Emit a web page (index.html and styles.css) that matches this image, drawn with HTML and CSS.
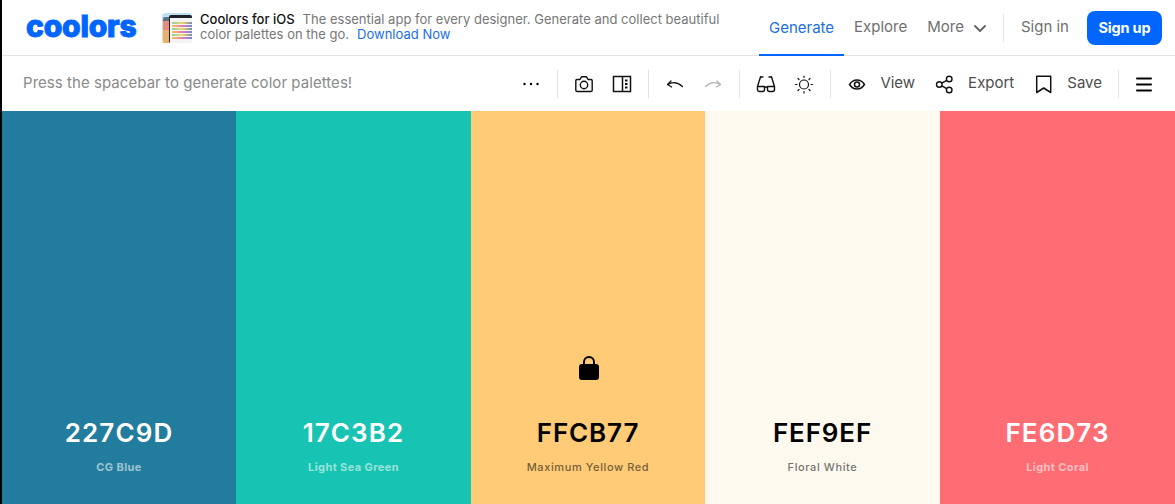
FILE: index.html
```html
<!DOCTYPE html>
<html>
<head>
<meta http-equiv="Content-Type" content="text/html; charset=utf-8">
<title>Coolors</title>
<link rel="stylesheet" href="styles.css">
</head>
<body>
<div class="page">

<!-- top bar -->
<header class="topbar">
  <a class="logo">coolors</a>
  <div class="promo">
    <svg class="promo-pic" width="30" height="30" viewBox="0 0 30 30">
      <defs>
        <linearGradient id="strip">
          <stop offset="0" stop-color="#f3c25f"/>
          <stop offset="0.5" stop-color="#e77fb0"/>
          <stop offset="1" stop-color="#6f86d8"/>
        </linearGradient>
        <linearGradient id="strip2">
          <stop offset="0" stop-color="#8fd0a5"/>
          <stop offset="0.5" stop-color="#f0d868"/>
          <stop offset="1" stop-color="#7a8aa8"/>
        </linearGradient>
      </defs>
      <rect width="30" height="30" rx="4" fill="#bfe0ee"/>
      <rect x="1" y="4" width="10" height="26" rx="2" fill="#5d7480"/>
      <rect x="1" y="8" width="8" height="22" fill="#e88a7c"/>
      <rect x="1" y="17" width="8" height="13" fill="#e9b268"/>
      <rect x="7" y="2" width="23" height="28" rx="2" fill="#20242a"/>
      <rect x="8" y="5" width="22" height="25" fill="#f4f4f2"/>
      <rect x="10" y="9" width="20" height="2" fill="url(#strip2)"/>
      <rect x="10" y="12" width="20" height="2" fill="url(#strip)"/>
      <rect x="10" y="15" width="20" height="2" fill="url(#strip2)"/>
      <rect x="10" y="18" width="20" height="2" fill="url(#strip)"/>
      <rect x="10" y="21" width="20" height="2" fill="url(#strip2)"/>
      <rect x="10" y="24" width="20" height="2" fill="url(#strip)"/>
    </svg>
    <div class="promo-text">
      <div class="promo-line"><b>Coolors for iOS</b><span>The essential app for every designer. Generate and collect beautiful</span></div>
      <div class="promo-line"><span class="plain">color palettes on the go.</span><a>Download Now</a></div>
    </div>
  </div>
  <nav class="nav">
    <a class="nav-link active">Generate</a>
    <a class="nav-link">Explore</a>
    <a class="nav-link">More
      <svg class="chev" width="14" height="9" viewBox="0 0 14 9"><path d="M2 2l5 5 5-5" fill="none" stroke="#666" stroke-width="2" stroke-linecap="round" stroke-linejoin="round"/></svg>
    </a>
    <span class="nav-sep"></span>
    <a class="nav-link signin">Sign in</a>
    <a class="signup">Sign up</a>
  </nav>
</header>

<!-- toolbar -->
<div class="toolbar">
  <span class="hint">Press the spacebar to generate color palettes!</span>

  <span class="tool">
    <svg width="20" height="20" viewBox="0 0 20 20"><circle cx="3.5" cy="10" r="1.2"/><circle cx="10" cy="10" r="1.2"/><circle cx="16.5" cy="10" r="1.2"/></svg>
  </span>
  <span class="sep"></span>
  <span class="tool">
    <svg width="20" height="20" viewBox="0 0 20 20" fill="none" stroke="#111" stroke-width="1.4" stroke-linejoin="round"><path d="M3 5.5h3l1.5-2.7h5L14 5.5h3a1.2 1.2 0 0 1 1.2 1.2v9.600a1.200 1.200 0 0 1-1.200 1.200H3a1.200 1.200 0 0 1-1.200-1.200V6.700A1.200 1.200 0 0 1 3 5.500z"/><circle cx="10" cy="11" r="3.700"/></svg>
  </span>
  <span class="tool">
    <svg width="20" height="20" viewBox="0 0 20 20" fill="none" stroke="#111" stroke-width="1.500"><rect x="1.500" y="2.500" width="17" height="15"/><path d="M10.500 2.500v15"/><path d="M13 6.500h2.500M13 10h2.500M13 13.500h2.500" stroke-width="1.800"/></svg>
  </span>
  <span class="sep"></span>
  <span class="tool">
    <svg width="20" height="20" viewBox="0 0 20 20" fill="none" stroke="#111" stroke-width="1.300" stroke-linecap="round" stroke-linejoin="round"><path d="M6 7L2.500 10.500 6.500 13"/><path d="M2.800 10.500C7 8 12.500 8 17.500 12.500"/></svg>
  </span>
  <span class="tool">
    <svg width="20" height="20" viewBox="0 0 20 20" fill="none" stroke="#b5b5b5" stroke-width="1.300" stroke-linecap="round" stroke-linejoin="round"><path d="M14 7l3.500 3.500-4 2.500"/><path d="M17.200 10.500C13 8 7.500 8 2.500 12.500"/></svg>
  </span>
  <span class="sep"></span>
  <span class="tool">
    <svg width="20" height="20" viewBox="0 0 20 20" fill="none" stroke="#111" stroke-width="1.400" stroke-linecap="round" stroke-linejoin="round"><path d="M4.500 3H7M15.500 3H13"/><path d="M4.500 3L1.500 12.500M15.500 3l3 9.500"/><path d="M1.500 12.500h7v3a2 2 0 0 1-2 2h-3a2 2 0 0 1-2-2zM11.500 12.500h7v3a2 2 0 0 1-2 2h-3a2 2 0 0 1-2-2z"/><path d="M8.500 13.500c1-.6 2-.6 3 0"/></svg>
  </span>
  <span class="tool">
    <svg width="20" height="20" viewBox="0 0 20 20" fill="none" stroke="#111" stroke-width="1.200" stroke-linecap="round"><circle cx="10" cy="10.500" r="4.500"/><path d="M10 2v1.500M10 17.500V19M1.500 10.500H3M17 10.500h1.500M4 4.500l1 1M15 15.500l1 1M16 4.500l-1 1M5 15.500l-1 1"/></svg>
  </span>
  <span class="sep"></span>
  <span class="tool">
    <svg width="20" height="20" viewBox="0 0 20 20" fill="none" stroke="#111" stroke-width="1.500" stroke-linejoin="round"><path d="M2.500 10.500C4.500 7.500 7 6 10 6s5.500 1.500 7.500 4.500c-2 3-4.500 4.500-7.500 4.500s-5.500-1.500-7.500-4.500z"/><circle cx="10" cy="10.500" r="2.500"/></svg>
  </span>
  <span class="tool-label view">View</span>
  <span class="tool">
    <svg width="20" height="20" viewBox="0 0 20 20" fill="none" stroke="#111" stroke-width="1.400"><circle cx="5.300" cy="10.500" r="2.800"/><circle cx="15.200" cy="5" r="2.800"/><circle cx="15.200" cy="16" r="2.800"/><path d="M7.800 9.200l4.900-2.800M7.800 11.800l4.900 2.800"/></svg>
  </span>
  <span class="tool-label">Export</span>
  <span class="tool">
    <svg width="20" height="20" viewBox="0 0 20 20" fill="none" stroke="#111" stroke-width="1.500" stroke-linejoin="round"><path d="M3.700 2.200h14v16.300L10.700 14l-7 4.500z"/></svg>
  </span>
  <span class="tool-label last">Save</span>
  <span class="sep sep-end"></span>
  <span class="tool">
    <svg width="20" height="20" viewBox="0 0 20 20" stroke="#000" stroke-width="2" stroke-linecap="round"><path d="M3 4.500h14M3 10.500h14M3 16.500h14"/></svg>
  </span>
</div>

<!-- palette -->
<main class="palette">
  <section class="swatch swatch-blue">
    <div class="hex">227C9D</div>
    <div class="name">CG Blue</div>
  </section>
  <section class="swatch swatch-green">
    <div class="hex">17C3B2</div>
    <div class="name">Light Sea Green</div>
  </section>
  <section class="swatch swatch-yellow dark">
    <svg class="lock" width="24" height="24" viewBox="0 0 24 24"><path d="M8 9V6a5 5 0 0 1 10 0v3" fill="none" stroke="#000" stroke-width="2"/><rect x="3" y="8" width="20" height="16" rx="3"/></svg>
    <div class="hex">FFCB77</div>
    <div class="name">Maximum Yellow Red</div>
  </section>
  <section class="swatch swatch-white dark">
    <div class="hex">FEF9EF</div>
    <div class="name">Floral White</div>
  </section>
  <section class="swatch swatch-coral">
    <div class="hex">FE6D73</div>
    <div class="name">Light Coral</div>
  </section>
</main>

</div>
</body>
</html>
```

FILE: styles.css
```css
html, body {
	margin: 0;
	padding: 0;
	background: #000;
}
.page {
	margin-left: 2px;
	height: 504px;
	display: flex;
	flex-direction: column;
	background: #fff;
	font-family: Inter, "Liberation Sans", sans-serif;
	overflow: hidden;
}

/* top bar */
.topbar {
	height: 55px;
	flex: none;
	display: flex;
	align-items: center;
	border-bottom: 1px solid #e3e3e3;
	padding-right: 13px;
}
.logo {
	flex: none;
	width: 136px;
	margin-left: 24px;
	padding-bottom: 2px;
	font-size: 30px;
	line-height: 53px;
	font-weight: 800;
	letter-spacing: -0.2px;
	color: #0066ff;
	-webkit-text-stroke: 1px #0066ff;
}
.promo {
	display: flex;
	align-items: center;
	width: 590px;
}
.promo-pic {
	flex: none;
	margin-right: 8px;
}
.promo-text {
	margin: 0 0 2px;
	font-size: 13px;
	line-height: 15px;
	letter-spacing: 0.01px;
	color: #777;
}
.promo-line {
	white-space: nowrap;
}
.promo-line b {
	font-weight: 500;
	color: #111;
	margin-right: 8px;
}
.promo-line .plain {
	margin-right: 8px;
}
.promo-line a {
	color: #1a6ee8;
}
.nav {
	margin-left: auto;
	display: flex;
	align-items: center;
	height: 55px;
}
.nav-link {
	height: 55px;
	box-sizing: border-box;
	padding: 0 10px 2px;
	display: flex;
	align-items: center;
	font-size: 15px;
	white-space: nowrap;
	color: #6f6f6f;
}
.nav-link.active {
	color: #1a6ee8;
	border-bottom: 2px solid #0066ff;
	padding-bottom: 0;
	height: 56px;
	margin-top: 1px;
}
.chev {
	margin-left: 9px;
	margin-top: 3px;
}
.nav-sep {
	width: 1px;
	height: 28px;
	margin: 0 7px 0 6px;
	background: #e3e3e3;
}
.signin {
	margin-right: 8px;
}
.signup {
	width: 75px;
	height: 34px;
	line-height: 33px;
	text-align: center;
	background: #0066ff;
	color: #fff;
	font-size: 14.5px;
	font-weight: 700;
	letter-spacing: -0.2px;
	border-radius: 8px;
}

/* toolbar */
.toolbar {
	height: 55px;
	flex: none;
	display: flex;
	align-items: center;
	padding-right: 12px;
}
.hint {
	margin-left: 21px;
	margin-right: auto;
	padding-bottom: 2px;
	font-size: 15px;
	letter-spacing: 0.05px;
	color: #8a8a8a;
}
.tool {
	width: 38px;
	height: 38px;
	display: flex;
	align-items: center;
	justify-content: center;
}
.sep {
	width: 1px;
	height: 28px;
	margin: 0 7px;
	background: #e3e3e3;
}
.sep-end {
	margin-right: 6px;
}
.tool-label {
	margin-left: 5px;
	margin-right: 10px;
	padding-bottom: 2px;
	font-size: 15px;
	color: #4d4d4d;
}
.tool-label.view {
	margin-left: 4px;
}
.tool-label.last {
	margin-right: 9px;
}

/* palette */
.palette {
	flex: 1;
	display: grid;
	grid-template-columns: 234px 235px 234px 235px 235px;
}
.swatch {
	display: flex;
	flex-direction: column;
	align-items: center;
	justify-content: flex-end;
	padding-bottom: 30px;
	color: #fff;
}
.swatch.dark {
	color: #000;
}
.swatch-blue { background: #227c9d; }
.swatch-green { background: #17c3b2; }
.swatch-yellow { background: #ffcb77; }
.swatch-white { background: #fef9ef; }
.swatch-coral { background: #fe6d73; }
.hex {
	font-size: 26px;
	line-height: 32px;
	font-weight: 600;
	letter-spacing: 1.1px;
}
.swatch.dark .hex {
	letter-spacing: 0.85px;
}
.name {
	margin-top: 11px;
	font-size: 11px;
	line-height: 14px;
	font-weight: 700;
	letter-spacing: 0.4px;
	opacity: 0.55;
}
.swatch.dark .name {
	font-weight: 500;
	letter-spacing: 0.6px;
}
.lock {
	margin-bottom: 37px;
}
```
